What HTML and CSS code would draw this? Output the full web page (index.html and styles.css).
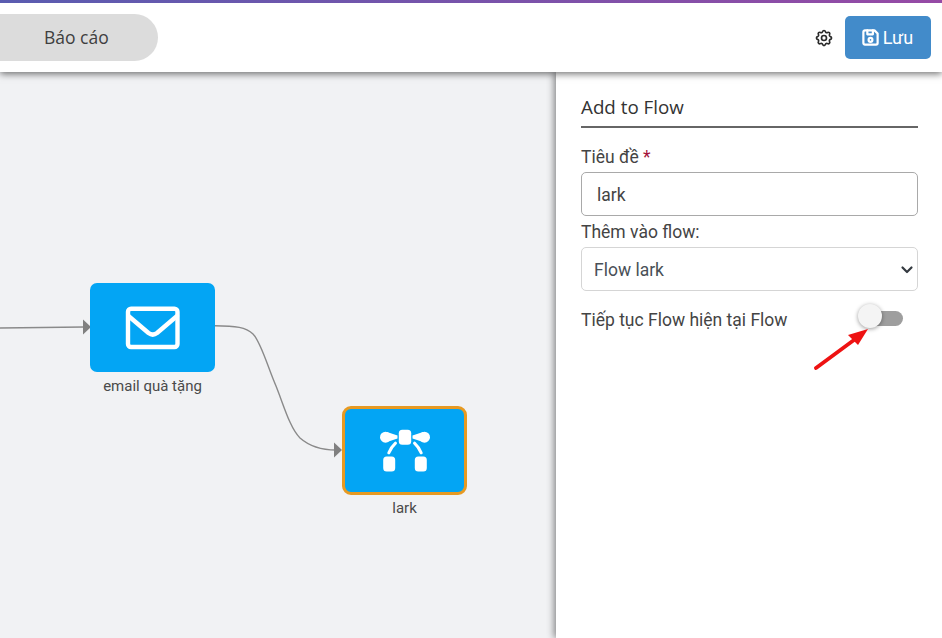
FILE: index.html
```html
<!DOCTYPE html>
<html lang="vi">
<head>
<meta charset="utf-8">
<title>Add to Flow</title>
<link rel="stylesheet" href="styles.css">
</head>
<body>
<div class="app">
  <header class="topbar">
    <div class="tab">Báo cáo</div>
    <div class="actions">
      <svg class="gear" width="20" height="20" viewBox="0 0 24 24" fill="none" stroke="#2a2a2a" stroke-width="2" stroke-linecap="round" stroke-linejoin="round">
        <path d="M10.3 4.3c.4-1.8 3-1.8 3.4 0a1.7 1.7 0 0 0 2.6 1.1c1.5-.9 3.3.8 2.4 2.4a1.7 1.7 0 0 0 1 2.5c1.8.4 1.8 3 0 3.4a1.7 1.7 0 0 0-1 2.6c.9 1.5-.9 3.3-2.4 2.4a1.7 1.7 0 0 0-2.6 1c-.4 1.8-3 1.8-3.4 0a1.7 1.7 0 0 0-2.6-1c-1.5.9-3.3-.9-2.4-2.4a1.7 1.7 0 0 0-1-2.6c-1.8-.4-1.8-3 0-3.4a1.7 1.7 0 0 0 1-2.5c-.9-1.6.9-3.3 2.4-2.4 1 .6 2.3.1 2.6-1.1z"/>
        <circle cx="12" cy="12" r="3"/>
      </svg>
      <button class="save" type="button">
        <svg class="save-icon" width="19" height="19" viewBox="0 0 24 24" fill="none" stroke="#fff" stroke-width="2.800" stroke-linecap="round" stroke-linejoin="round">
          <path d="M5 3h12l4 4v12a2 2 0 0 1-2 2H5a2 2 0 0 1-2-2V5a2 2 0 0 1 2-2z"/>
          <path d="M8 3v5h7V3"/>
          <circle cx="12" cy="15" r="2.400"/>
        </svg>
        <span>Lưu</span>
      </button>
    </div>
  </header>
  <main class="body">
    <section class="canvas">
      <svg class="edges" width="556" height="566" viewBox="0 0 556 566" fill="none">
        <path d="M0 256C30 255.500 60 255.200 84 255" stroke="#8a8a8a" stroke-width="1.400"/>
        <path d="M83 247.500l8 7.500-8 7.500z" fill="#808080"/>
        <path d="M215 253.700C236 253.700 246 255.500 253 262C261 270 268 296 276 314C284 334 290 356 300 366C308 373 320 378 336 378" stroke="#8a8a8a" stroke-width="1.400"/>
        <path d="M334 370.500l8 7.500-8 7.500z" fill="#808080"/>
      </svg>
      <div class="node node-email">
        <div class="tile">
          <svg width="56" height="46" viewBox="0 0 56 46" fill="none" stroke="#fff" stroke-width="4.400" stroke-linecap="round" stroke-linejoin="round">
            <rect x="3" y="3.700" width="49.500" height="38.300" rx="3"/>
            <path d="M3.500 11l20 17a7 7 0 0 0 8.500 0l20-17"/>
          </svg>
        </div>
        <div class="node-label">email quà tặng</div>
      </div>
      <div class="node node-lark">
        <div class="tile selected">
          <svg width="50" height="44" viewBox="0 0 50 44" fill="#fff">
            <circle cx="5.500" cy="8.200" r="5.500"/>
            <circle cx="44.500" cy="8.200" r="5.500"/>
            <path d="M7 3l10.500 3.500v3L7 13z"/>
            <path d="M43 3L32.500 6.500v3L43 13z"/>
            <rect x="18.800" y="0.800" width="12.400" height="15" rx="3.500"/>
            <rect x="3.200" y="27.500" width="12" height="15" rx="3.500"/>
            <rect x="34.800" y="27.500" width="12" height="15" rx="3.500"/>
            <path d="M15.500 14.200C12.500 17 10.500 20 8.800 23.800" fill="none" stroke="#fff" stroke-width="3" stroke-linecap="round"/>
            <path d="M34.500 14.200C37.500 17 39.500 20 41.200 23.800" fill="none" stroke="#fff" stroke-width="3" stroke-linecap="round"/>
          </svg>
        </div>
        <div class="node-label">lark</div>
      </div>
    </section>
    <aside class="panel">
      <h2 class="panel-title">Add to Flow</h2>
      <div class="field">
        <label class="label">Tiêu đề <span class="req">*</span></label>
        <div class="input input-text">lark</div>
      </div>
      <div class="field">
        <label class="label">Thêm vào flow:</label>
        <div class="input input-select">
          <span>Flow lark</span>
          <svg width="14" height="10" viewBox="0 0 14 10" fill="none" stroke="#343a40" stroke-width="2.200" stroke-linecap="round" stroke-linejoin="round"><path d="M2.500 2.500l4.500 4.500 4.500-4.500"/></svg>
        </div>
      </div>
      <div class="toggle-row">
        <span class="label">Tiếp tục Flow hiện tại Flow</span>
        <span class="toggle"><span class="knob"></span></span>
        <svg class="arrow" width="60" height="50" viewBox="0 0 60 50" fill="#ee1212">
          <path d="M2 47L42 17.500" stroke="#ee1212" stroke-width="3.800" stroke-linecap="round"/>
          <path d="M54 8L34 14l10 10z"/>
        </svg>
      </div>
    </aside>
  </main>
</div>
</body>
</html>
```

FILE: styles.css
```css
html, body {
  margin: 0;
  padding: 0;
  height: 100%;
  overflow: hidden;
}
body {
  font-family: Roboto, "Liberation Sans", sans-serif;
  color: #333;
  background: #f1f2f4;
}
.app {
  display: flex;
  flex-direction: column;
  height: 638px;
  width: 942px;
  overflow: hidden;
}
.topbar {
  height: 69px;
  flex: none;
  display: flex;
  align-items: center;
  justify-content: space-between;
  background: #fff;
  border-top: 3px solid transparent;
  border-image: linear-gradient(90deg, #5a5cb0, #964aa5) 1;
  border-left: 0;
  border-right: 0;
  border-bottom: 0;
  box-shadow: 0 2px 7px rgba(0, 0, 0, .55);
  position: relative;
  z-index: 2;
}
.tab {
  width: 158px;
  height: 47px;
  box-sizing: border-box;
  padding: 0 0 2px 44px;
  display: flex;
  align-items: center;
  background: #dcdcdc;
  border-radius: 0 24px 24px 0;
  font: 17.500px "Open Sans", sans-serif;
  color: #3f3f3f;
}
.actions {
  display: flex;
  align-items: center;
  gap: 11px;
  padding-right: 11px;
}
.gear { display: block; }
.save {
  width: 86px;
  height: 43px;
  padding: 0;
  border: 0;
  border-radius: 5px;
  background: #428bca;
  color: #fff;
  display: flex;
  align-items: center;
  justify-content: center;
  gap: 3px;
  font: 18px Roboto, sans-serif;
}
.save-icon { margin-left: -2px; }
.body {
  flex: 1;
  display: flex;
  min-height: 0;
}
.canvas {
  width: 556px;
  flex: none;
  position: relative;
  background: #f1f2f4;
}
.edges {
  position: absolute;
  left: 0;
  top: 0;
}
.node {
  position: absolute;
  width: 125px;
  display: flex;
  flex-direction: column;
  align-items: center;
}
.node-email { left: 90px; top: 211px; }
.node-lark { left: 342px; top: 334px; }
.tile {
  width: 125px;
  height: 89px;
  box-sizing: border-box;
  display: flex;
  align-items: center;
  justify-content: center;
  background: #03a5f4;
  border-radius: 7px;
}
.tile.selected {
  border: 3px solid #e79a22;
  border-radius: 9px;
}
.node-label {
  margin-top: 5px;
  font-size: 15px;
  line-height: 18px;
  color: #4a4a4a;
}
.node-lark .node-label { margin-top: 4px; }
.panel {
  flex: 1;
  box-sizing: border-box;
  padding: 23px 24px 0 25px;
  background: #fff;
  box-shadow: -2px 0 7px rgba(0, 0, 0, .45);
  position: relative;
  z-index: 1;
}
.panel-title {
  margin: 0 0 15px;
  height: 31px;
  border-bottom: 2px solid #666;
  font: 400 18.800px/24px "Open Sans", sans-serif;
  color: #333;
}
.field {
  display: flex;
  flex-direction: column;
}
.label {
  font-size: 17.500px;
  line-height: 26px;
  color: #444;
}
.field .label {
  padding-top: 1px;
  margin-bottom: -1px;
}
.req { color: #a3123a; }
.input {
  box-sizing: border-box;
  width: 337px;
  display: flex;
  align-items: center;
  background: #fff;
  border-radius: 5px;
  font-size: 17.500px;
}
.input-text {
  height: 44px;
  margin-top: 3px;
  margin-bottom: 2px;
  padding: 2px 0 0 15px;
  border: 1px solid #a9a9a9;
  color: #444;
}
.input-select {
  height: 44px;
  margin-top: 3px;
  padding: 2px 3px 0 12px;
  justify-content: space-between;
  border: 1px solid #d5d5d5;
  color: #495057;
}
.toggle-row {
  position: relative;
  display: flex;
  align-items: center;
  justify-content: space-between;
  width: 322px;
  margin-top: 16px;
}
.toggle {
  position: relative;
  display: block;
  width: 40px;
  height: 15px;
  margin-top: -3px;
  border-radius: 8px;
  background: #9e9e9e;
}
.knob {
  position: absolute;
  left: -5px;
  top: -7px;
  width: 24px;
  height: 24px;
  border-radius: 50%;
  background: #f4f4f4;
  box-shadow: 0 1px 4px rgba(0, 0, 0, .4);
}
.arrow {
  position: absolute;
  left: 233px;
  top: 14px;
}
```
